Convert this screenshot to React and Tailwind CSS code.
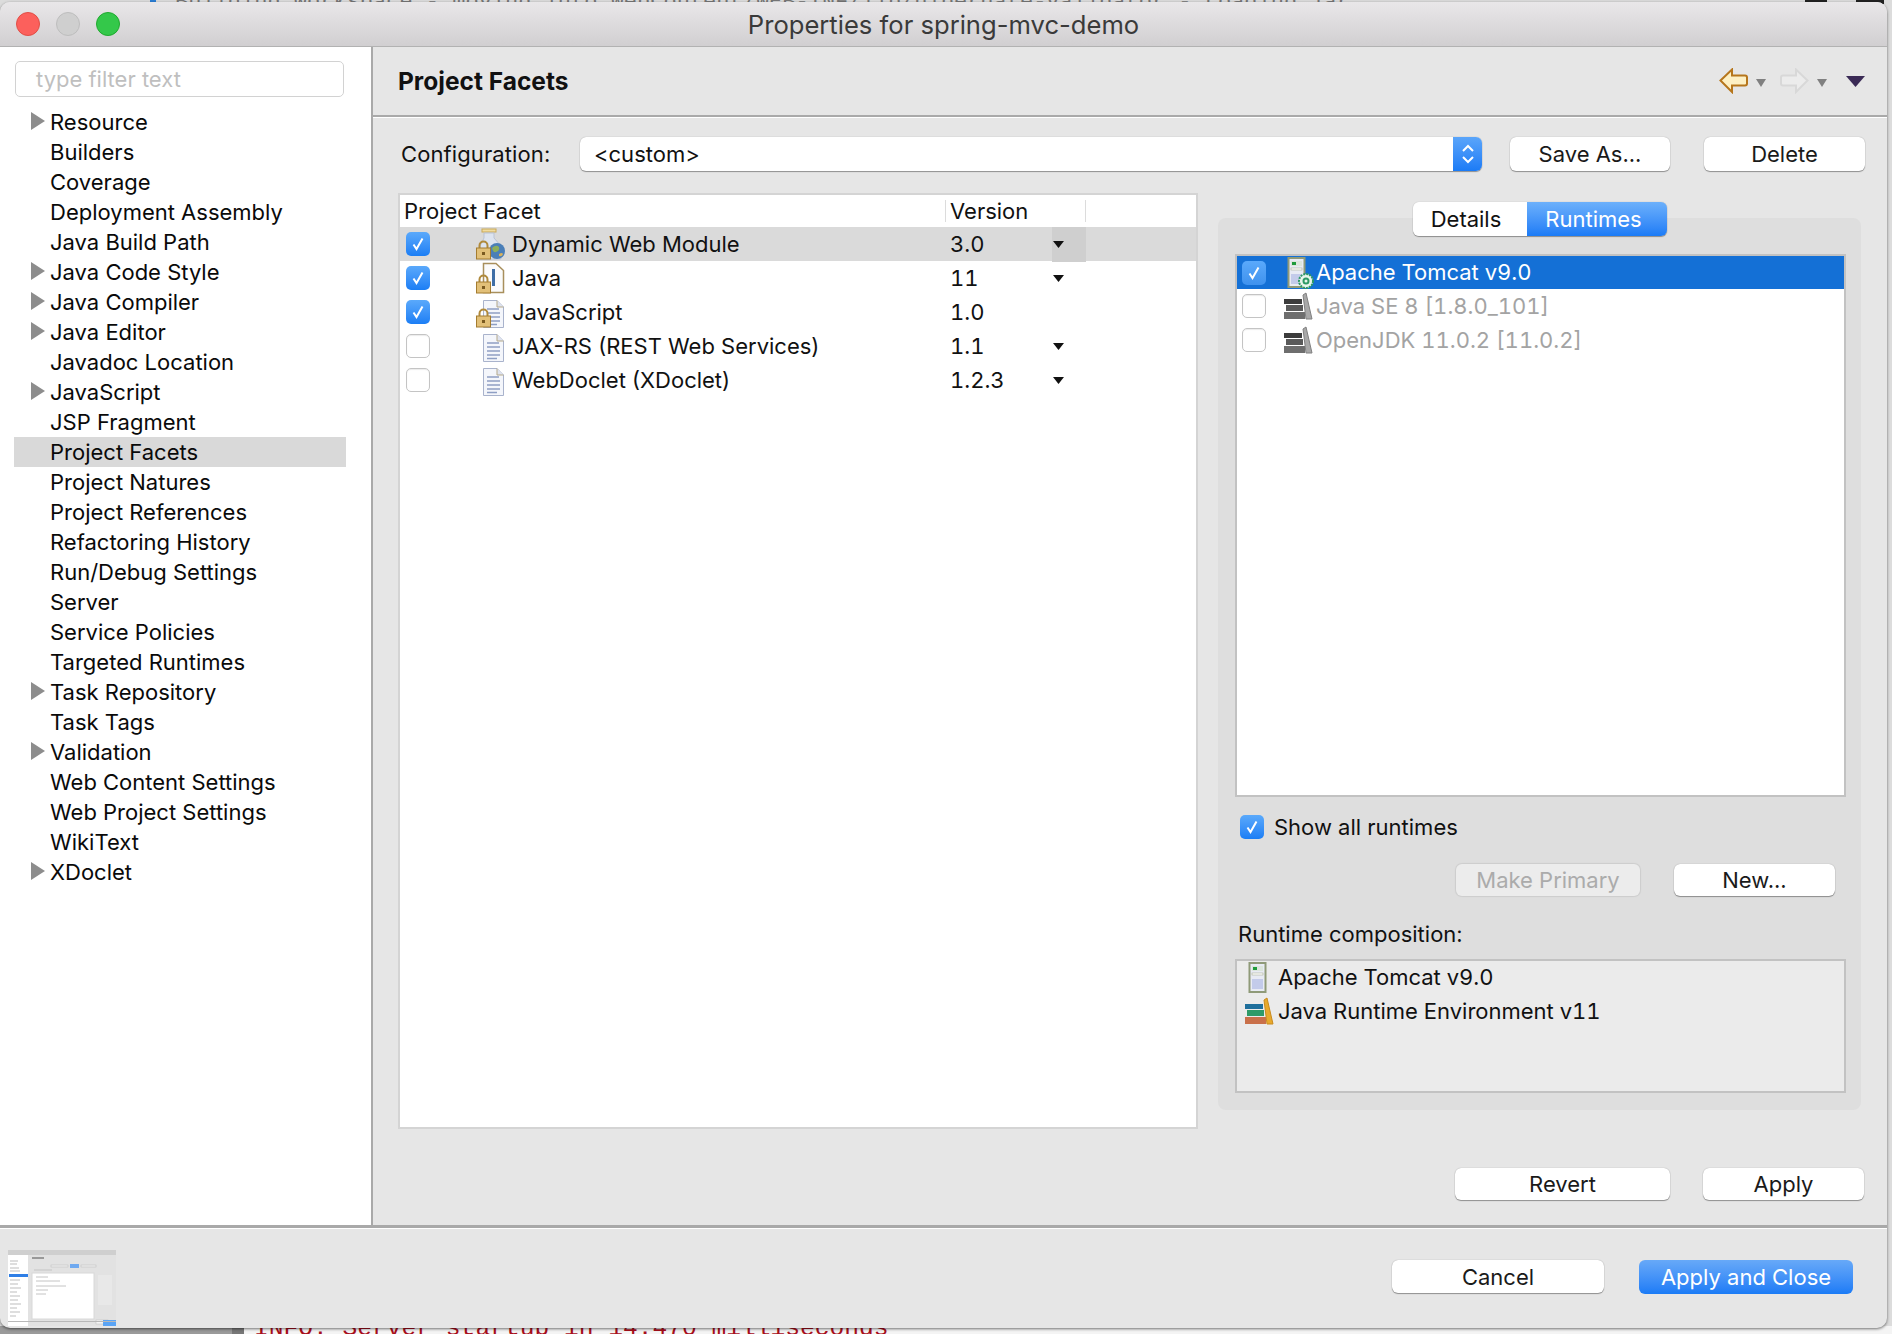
import React from "react";

const FONT = "font-['Inter','Liberation_Sans',sans-serif]";

const tree = [
  ["Resource", 1], ["Builders"], ["Coverage"], ["Deployment Assembly"], ["Java Build Path"],
  ["Java Code Style", 1], ["Java Compiler", 1], ["Java Editor", 1], ["Javadoc Location"],
  ["JavaScript", 1], ["JSP Fragment"], ["Project Facets", 0, 1], ["Project Natures"],
  ["Project References"], ["Refactoring History"], ["Run/Debug Settings"], ["Server"],
  ["Service Policies"], ["Targeted Runtimes"], ["Task Repository", 1], ["Task Tags"],
  ["Validation", 1], ["Web Content Settings"], ["Web Project Settings"], ["WikiText"], ["XDoclet", 1],
];

function Check({ on, className = "" }) {
  return on ? (
    <span className={`flex h-6 w-6 shrink-0 items-center justify-center rounded-[5px] bg-gradient-to-b from-[#5aa9fb] to-[#1a7ef5] ${className}`}>
      <svg width="14" height="16" viewBox="0 0 14 16"><path d="M2.5 8.5 L5.5 13 L11.5 2.5" fill="none" stroke="#fff" strokeWidth="2" /></svg>
    </span>
  ) : (
    <span className={`block h-6 w-6 shrink-0 rounded-[5px] border border-[#c4c4c4] bg-white shadow-[inset_0_1px_1px_rgba(0,0,0,0.08)] ${className}`} />
  );
}

function Lock() {
  return (
    <g>
      <path d="M3.5 21 V17.5 a4 4 0 0 1 8 0 V21" fill="none" stroke="#b08a3c" strokeWidth="2" />
      <rect x="0.5" y="20" width="14" height="11" fill="#e2c078" stroke="#a47c30" />
      <rect x="6" y="24" width="3" height="3" fill="#7a5a20" />
    </g>
  );
}

function Doc({ x = 5 }) {
  return (
    <g transform={`translate(${x} 0)`}>
      <path d="M0.5 4.5 H14 L20.5 11 V31.5 H0.5 Z" fill="#f4f6fb" stroke="#a9b3cc" />
      <path d="M14 4.5 V11 H20.5" fill="#dfe3ee" stroke="#b5a98a" />
      <path d="M4 13 H16 M4 17 H17 M4 21 H17 M4 25 H17 M4 28.5 H14" stroke="#8e9fc4" strokeWidth="1.5" />
    </g>
  );
}

function FacetIcon({ kind }) {
  return (
    <svg className="ml-[46px] mr-[6px] shrink-0" width="30" height="32" viewBox="0 0 30 32">
      {kind === "web" && (
        <g>
          <rect x="6" y="1" width="14" height="3" fill="#f1dca0" stroke="#c8a858" />
          <path d="M8 5 H18 V10 L25 18 V31 H4 V18 L8 10 Z" fill="#dde4f0" stroke="#b9c2d4" />
          <circle cx="21" cy="23" r="8" fill="#4a7fb8" />
          <path d="M16 20 q4 -4 7 -1 q1 4 -3 5 q-3 1 -4 -4 Z" fill="#8cae5c" />
          <path d="M23 26 q3 -2 4 0 q-1 3 -4 2 Z" fill="#d9b25c" />
          <Lock />
        </g>
      )}
      {kind === "java" && (
        <g>
          <path d="M7.5 1.5 H20 L27.5 8.5 V30.5 H7.5 Z" fill="#fbfbfb" stroke="#a88f5c" strokeWidth="1.5" />
          <rect x="16" y="7" width="3" height="17" fill="#3f6ea5" />
          <Lock />
        </g>
      )}
      {kind === "js" && (
        <g>
          <Doc x={7} />
          <Lock />
        </g>
      )}
      {kind === "doc" && <Doc x={7} />}
    </svg>
  );
}

function ServerIcon({ gear }) {
  return (
    <svg className="shrink-0" width="30" height="32" viewBox="0 0 30 32">
      <rect x="1.5" y="1" width="16" height="29" fill="#e8ebf4" stroke="#8f9a78" strokeWidth="2" />
      <rect x="4" y="4" width="11" height="5" fill="#dce6dc" />
      <rect x="5" y="5" width="4" height="3" fill="#1f9b3c" />
      <rect x="4" y="11" width="11" height="2" fill="#fff" stroke="#9aa284" strokeWidth="0.5" />
      <rect x="4" y="17" width="11" height="10" fill="#c3cbea" />
      {gear && (
        <g>
          <circle cx="19" cy="24" r="7" fill="#e8f5ec" stroke="#2d9a66" strokeWidth="2" strokeDasharray="2 1" />
          <circle cx="19" cy="24" r="2.5" fill="none" stroke="#2d9a66" strokeWidth="2" />
        </g>
      )}
    </svg>
  );
}

function BooksIcon({ color }) {
  const c = color
    ? ["#1f6f9c", "#2f9a68", "#c9704a", "#e8a92c", "#c88a1e"]
    : ["#3c3c3c", "#5a5a5a", "#6e6e6e", "#a8a8a8", "#808080"];
  return (
    <svg className="shrink-0" width="30" height="28" viewBox="0 0 30 28">
      <rect x="1" y="7" width="18" height="5" fill={c[0]} />
      <rect x="3" y="13" width="17" height="6" fill={c[1]} />
      <rect x="1" y="20" width="21" height="7" fill={c[2]} />
      <path d="M20 3 L23 1 L29 27 H23 Z" fill={c[3]} stroke={c[4]} />
    </svg>
  );
}

function Btn({ children, className = "", primary, disabled }) {
  const look = primary
    ? "bg-gradient-to-b from-[#67a9f8] to-[#1a7bf6] text-white"
    : disabled
      ? "bg-[#ececec] text-[#ababab] shadow-[0_0_1px_1px_rgba(0,0,0,0.08)]"
      : "bg-white text-[#1a1a1a] shadow-[0_1px_1px_rgba(0,0,0,0.35),0_0_1px_rgba(0,0,0,0.35)]";
  return (
    <button className={`flex shrink-0 items-center justify-center rounded-[6px] text-[22px] leading-none ${look} ${className}`}>
      {children}
    </button>
  );
}

function Tri({ className = "" }) {
  return (
    <svg className={`shrink-0 ${className}`} width="12" height="7" viewBox="0 0 12 7">
      <path d="M0 0 H11 L5.5 7 Z" fill="#111" />
    </svg>
  );
}

function FacetRow({ on, kind, name, ver, arrow, sel }) {
  return (
    <div className={`relative flex h-[34px] items-center pl-[6px] text-[22px] text-[#111] ${sel ? "bg-[#dadada]" : ""}`}>
      <Check on={on} />
      <FacetIcon kind={kind} />
      <span className="w-[438px] whitespace-nowrap">{name}</span>
      <span className="w-[103px] tabular-nums">{ver}</span>
      {arrow && !sel && <Tri />}
      {sel && (
        <span className="absolute left-[652px] top-0 flex h-[35px] w-[34px] items-center bg-[#cfcfcf] pl-px">
          <Tri />
        </span>
      )}
    </div>
  );
}

function Thumbnail() {
  return (
    <svg className="shrink-0 blur-[0.5px]" width="108" height="76" viewBox="0 0 108 76">
      <rect width="108" height="76" fill="#e2e2e2" />
      <rect width="108" height="5" fill="#cfcfcf" />
      <rect x="0" y="5" width="20" height="71" fill="#fff" />
      <rect x="24" y="23" width="62" height="46" fill="#fff" stroke="#d8d8d8" />
      <rect x="1" y="24" width="19" height="3" fill="#2f7fe6" />
      <rect x="62" y="14" width="9" height="4" fill="#6fa9f0" />
      <rect x="43" y="15" width="17" height="2" fill="#ececec" stroke="#bbb" strokeWidth="0.5" />
      <rect x="73" y="15" width="15" height="2" fill="#ececec" stroke="#bbb" strokeWidth="0.5" />
      <rect x="24" y="7" width="12" height="2" fill="#999" />
      <path d="M2 11 H10 M2 14 H9 M2 18 H11 M2 21 H12 M2 30 H12 M2 34 H10 M2 38 H13 M2 42 H9 M2 46 H12 M2 50 H10 M2 54 H13 M2 58 H9 M2 62 H12 M2 66 H8" stroke="#bdbdbd" strokeWidth="1" />
      <path d="M26 20 H44 M28 27 H40 M28 31 H52 M28 36 H58 M28 40 H40 M28 44 H38" stroke="#c4c4c4" strokeWidth="1" />
      <rect x="88" y="70" width="12" height="4" fill="#f4f4f4" stroke="#bbb" strokeWidth="0.5" />
      <rect x="95" y="70" width="13" height="6" fill="#5aa4f5" />
      <rect x="90" y="25" width="14" height="30" fill="#e8e8e8" />
      <rect x="0" y="71" width="108" height="1" fill="#b8b8b8" />
    </svg>
  );
}

export default function App() {
  return (
    <div className={`relative h-[1334px] w-[1892px] overflow-hidden bg-[#dcdcdc] ${FONT}`}>
      {/* desktop behind the dialog */}
      <div className="absolute bottom-0 left-0 flex h-2 w-full">
        <span className="w-[232px] bg-[#9a9a9a]" />
        <span className="w-[12px] bg-[#777]" />
        <span className="flex-1 bg-[#f4f4f4]" />
      </div>
      <div className="absolute bottom-[-14px] left-[254px] whitespace-nowrap font-['Liberation_Mono',monospace] text-[24.6px] text-[#a80f1c]">
        INFO: Server startup in 14.470 milliseconds
      </div>
      <span className="absolute left-[150px] top-0 h-[3px] w-[6px] bg-[#2b7fd6]" />
      <div className="absolute left-[175px] top-[-14px] whitespace-nowrap font-['Liberation_Mono',monospace] text-[22px] text-[#777]">
        Building workspace - moving into WebContent/WEB-INF/lib/hibernate-validator - Loading jar
      </div>
      <span className="absolute right-[65px] top-0 h-[4px] w-[22px] bg-[#222]" />
      <span className="absolute right-[8px] top-0 h-[4px] w-[28px] bg-[#222]" />

      {/* dialog */}
      <div className="relative mt-[2px] flex h-[1326px] w-[1887px] flex-col overflow-hidden rounded-[10px] bg-[#e6e6e6] shadow-[0_1px_3px_rgba(0,0,0,0.55)]">
        {/* title bar */}
        <div className="relative flex h-[45px] shrink-0 items-center justify-center border-b border-[#b2b2b2] bg-gradient-to-b from-[#e9e7e9] to-[#d1cfd1] pt-[2px] text-[25.6px] text-[#3a3a3a]">
          <div className="absolute left-4 top-[10px] flex gap-4">
            <span className="h-6 w-6 rounded-full border border-[#e04e46] bg-[#fc605c]" />
            <span className="h-6 w-6 rounded-full border border-[#bdbdbd] bg-[#cfcfcf]" />
            <span className="h-6 w-6 rounded-full border border-[#20a92f] bg-[#34c84a]" />
          </div>
          <span className="whitespace-nowrap">Properties for spring-mvc-demo</span>
        </div>

        {/* body */}
        <div className="flex h-[1181px] shrink-0 border-b-[3px] border-[#a9a9a9]">
          {/* sidebar */}
          <aside className="w-[373px] shrink-0 border-r-2 border-[#a9a9a9] bg-white pl-[14px] pr-[25px] pt-[14px]">
            <div className="ml-px flex h-9 w-[329px] items-center rounded-[5px] border border-[#d2d2d2] pl-[20px] text-[22px] text-[#bfbfbf]">
              type filter text
            </div>
            <ul className="mt-[10px] text-[22px] leading-[30px] text-[#0a0a0a]">
              {tree.map(([label, arrow, sel]) => (
                <li key={label} className={`relative h-[30px] whitespace-nowrap pl-9 ${sel ? "bg-[#d9d9d9]" : ""}`}>
                  {arrow ? (
                    <svg className="absolute left-[17px] top-[5px]" width="14" height="18" viewBox="0 0 14 18">
                      <path d="M0 0 L14 9 L0 18 Z" fill="#8d8d8d" />
                    </svg>
                  ) : null}
                  {label}
                </li>
              ))}
            </ul>
          </aside>

          {/* main */}
          <main className="flex min-w-0 flex-1 flex-col">
            <header className="flex h-[70px] shrink-0 items-center border-b-[2px] border-[#a9a9a9] pl-[25px] pr-[22px] shadow-[0_1px_0_#fff]">
              <h1 className="text-[24.5px] font-bold text-[#111]">Project Facets</h1>
              <div className="ml-auto flex items-center">
                <svg width="29" height="26" viewBox="0 0 29 26">
                  <path d="M1.5 12.5 L13 1.5 V7.5 H26 Q28 7.5 28 9.5 V15.5 Q28 17.5 26 17.5 H13 V24 Z" fill="#fdf0c4" stroke="#b6761c" strokeWidth="2" />
                </svg>
                <svg className="ml-2 mt-1" width="10" height="8" viewBox="0 0 10 8"><path d="M0 0 H10 L5 8 Z" fill="#808080" /></svg>
                <svg className="ml-[14px]" width="29" height="26" viewBox="0 0 29 26">
                  <path d="M27.5 12.5 L16 1.5 V7.5 H3 Q1 7.5 1 9.5 V15.5 Q1 17.5 3 17.5 H16 V24 Z" fill="#ececec" stroke="#d8d8d8" strokeWidth="2" />
                </svg>
                <svg className="ml-2 mt-1" width="10" height="8" viewBox="0 0 10 8"><path d="M0 0 H10 L5 8 Z" fill="#808080" /></svg>
                <svg className="ml-[19px]" width="19" height="11" viewBox="0 0 19 11"><path d="M0 0 H19 L9.5 11 Z" fill="#3a2a55" /></svg>
              </div>
            </header>

            {/* configuration */}
            <div className="mt-[20px] flex h-[34px] shrink-0 items-center pl-[28px] text-[22px] text-[#111]">
              <span className="w-[179px] whitespace-nowrap tracking-[0.1px]">Configuration:</span>
              <div className="relative flex h-[34px] w-[902px] items-center rounded-[6px] bg-white pl-[14px] shadow-[0_1px_1px_rgba(0,0,0,0.35),0_0_1px_rgba(0,0,0,0.35)]">
                &lt;custom&gt;
                <span className="absolute right-0 top-0 flex h-full w-[29px] items-center justify-center rounded-r-[6px] bg-gradient-to-b from-[#5aa5fa] to-[#1a7bf6]">
                  <svg width="14" height="22" viewBox="0 0 14 22"><path d="M2 8 L7 3 L12 8 M2 14 L7 19 L12 14" fill="none" stroke="#fff" strokeWidth="2" /></svg>
                </span>
              </div>
              <Btn className="ml-7 h-[34px] w-[160px]">Save As...</Btn>
              <Btn className="ml-[34px] h-[34px] w-[161px]">Delete</Btn>
            </div>

            <div className="flex min-h-0 flex-1 pl-[25px]">
              {/* facets table */}
              <section className="mt-[22px] h-[936px] w-[800px] shrink-0 border-2 border-[#d4d4d4] bg-white">
                <div className="flex h-[32px] items-center text-[22px] text-[#111]">
                  <span className="w-[545px] pl-1">Project Facet</span>
                  <span className="h-[22px] w-px bg-[#dcdcdc]" />
                  <span className="w-[139px] pl-1">Version</span>
                  <span className="h-[22px] w-px bg-[#dcdcdc]" />
                </div>
                <FacetRow sel on kind="web" name="Dynamic Web Module" ver="3.0" arrow />
                <FacetRow on kind="java" name="Java" ver="11" arrow />
                <FacetRow on kind="js" name="JavaScript" ver="1.0" />
                <FacetRow kind="doc" name="JAX-RS (REST Web Services)" ver="1.1" arrow />
                <FacetRow kind="doc" name="WebDoclet (XDoclet)" ver="1.2.3" arrow />
              </section>

              {/* runtimes */}
              <section className="relative ml-5 mt-[47px] h-[892px] w-[643px] shrink-0 rounded-[8px] bg-[#dedede] px-[17px] pt-[36px]">
                <div className="absolute left-[195px] top-[-16px] flex h-[34px] w-[254px] overflow-hidden rounded-[6px] text-[22px] shadow-[0_1px_1px_rgba(0,0,0,0.35),0_0_1px_rgba(0,0,0,0.3)]">
                  <span className="flex w-[114px] items-center justify-center bg-white pr-[8px] text-[#111]">Details</span>
                  <span className="flex flex-1 items-center justify-center bg-gradient-to-b from-[#6cb0fb] to-[#1a7bf6] pr-[7px] text-white">Runtimes</span>
                </div>

                <div className="h-[543px] w-[611px] border-2 border-[#c2c2c2] bg-white text-[22px] tabular-nums">
                  <div className="flex h-[33px] items-center bg-[#1470d6] pl-[5px] text-white">
                    <Check on className="from-[#3f92ee] to-[#3f92ee]" />
                    <span className="ml-[21px] flex w-[29px] shrink-0"><ServerIcon gear /></span>
                    <span className="whitespace-nowrap">Apache Tomcat v9.0</span>
                  </div>
                  {["Java SE 8 [1.8.0_101]", "OpenJDK 11.0.2 [11.0.2]"].map((t) => (
                    <div key={t} className="flex h-[34px] items-center pl-[5px] text-[#a3a3a3]">
                      <Check />
                      <span className="ml-[17px] flex w-[33px] shrink-0"><BooksIcon /></span>
                      <span className="whitespace-nowrap">{t}</span>
                    </div>
                  ))}
                </div>

                <label className="ml-[5px] mt-[18px] flex h-6 items-center gap-[10px] text-[22px] text-[#111]">
                  <Check on />
                  Show all runtimes
                </label>

                <div className="mt-[25px] flex justify-end pr-[9px]">
                  <Btn disabled className="h-[32px] w-[184px]">Make Primary</Btn>
                  <Btn className="ml-[34px] h-[32px] w-[161px]">New...</Btn>
                </div>

                <div className="ml-[3px] mt-[24px] h-[28px] text-[22px] leading-[28px] text-[#111]">Runtime composition:</div>

                <div className="mt-[11px] h-[134px] w-[611px] border-2 border-[#c2c2c2] bg-[#ebebeb] text-[22px] text-[#111] tabular-nums">
                  <div className="flex h-[33px] items-center pl-[11px]">
                    <span className="flex w-[30px] shrink-0"><ServerIcon /></span>
                    <span className="whitespace-nowrap">Apache Tomcat v9.0</span>
                  </div>
                  <div className="flex h-[34px] items-center pl-[7px]">
                    <span className="flex w-[34px] shrink-0"><BooksIcon color /></span>
                    <span className="whitespace-nowrap">Java Runtime Environment v11</span>
                  </div>
                </div>
              </section>
            </div>

            <div className="mb-[25px] flex shrink-0 justify-end pr-[23px]">
              <Btn className="h-8 w-[215px]">Revert</Btn>
              <Btn className="ml-[33px] h-8 w-[161px]">Apply</Btn>
            </div>
          </main>
        </div>

        {/* footer */}
        <footer className="relative flex min-h-0 flex-1 border-t border-white">
          <div className="ml-2 mt-[21px]"><Thumbnail /></div>
          <div className="ml-auto mr-[34px] mt-[31px] flex">
            <Btn className="h-[33px] w-[212px]">Cancel</Btn>
            <Btn primary className="ml-[35px] h-[34px] w-[214px]">Apply and Close</Btn>
          </div>
        </footer>
      </div>
    </div>
  );
}
